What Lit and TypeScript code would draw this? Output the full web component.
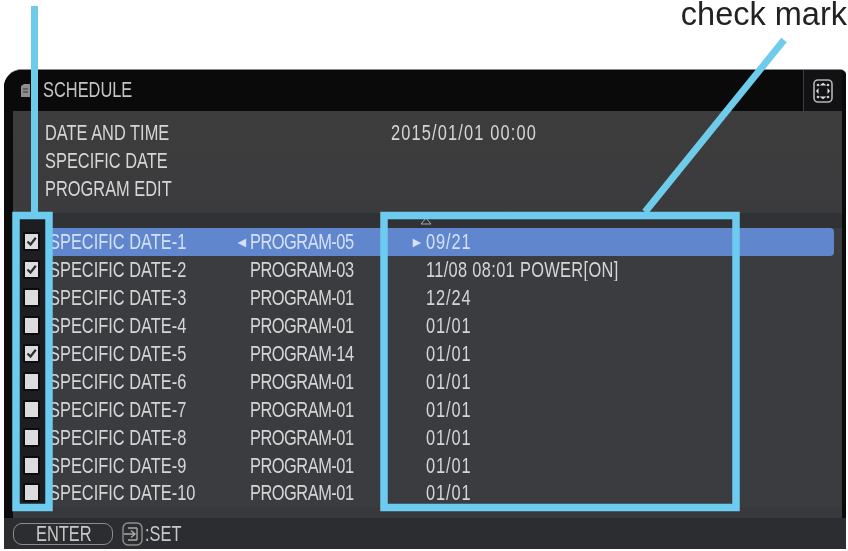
import { LitElement, html, css, svg } from "lit";
import { customElement } from "lit/decorators.js";

interface Row { name: string; program: string; date: string; checked: boolean; }

const ROWS: Row[] = [
  { name: "SPECIFIC DATE-1", program: "PROGRAM-05", date: "09/21", checked: true },
  { name: "SPECIFIC DATE-2", program: "PROGRAM-03", date: "11/08 08:01 POWER[ON]", checked: true },
  { name: "SPECIFIC DATE-3", program: "PROGRAM-01", date: "12/24", checked: false },
  { name: "SPECIFIC DATE-4", program: "PROGRAM-01", date: "01/01", checked: false },
  { name: "SPECIFIC DATE-5", program: "PROGRAM-14", date: "01/01", checked: true },
  { name: "SPECIFIC DATE-6", program: "PROGRAM-01", date: "01/01", checked: false },
  { name: "SPECIFIC DATE-7", program: "PROGRAM-01", date: "01/01", checked: false },
  { name: "SPECIFIC DATE-8", program: "PROGRAM-01", date: "01/01", checked: false },
  { name: "SPECIFIC DATE-9", program: "PROGRAM-01", date: "01/01", checked: false },
  { name: "SPECIFIC DATE-10", program: "PROGRAM-01", date: "01/01", checked: false },
];

@customElement("app-root")
export class AppRoot extends LitElement {
  static styles = css`
    :host {
      display: block;
      position: relative;
      width: 848px;
      height: 551px;
      overflow: hidden;
      background: #fff;
      font-family: "Liberation Sans", Arial, sans-serif;
      font-size: 20px;
      color: #d6d6d6;
    }
    .t {
      display: inline-block;
      white-space: nowrap;
      transform: scale(0.82, 1.08);
      transform-origin: left center;
    }
    .page { display: flex; flex-direction: column; height: 100%; box-sizing: border-box; padding: 69px 2px 2px 4px; }
    .window {
      flex: 1;
      display: flex;
      flex-direction: column;
      background: #0b0b0c;
      border-radius: 18px 6px 0 0;
      border-top: 1px solid #8a8a8a;
      overflow: hidden;
      filter: blur(0.6px);
    }
    .title {
      height: 41px;
      flex: none;
      display: flex;
      align-items: center;
      padding: 0 9px 0 16px;
      background: #0a0a0b;
    }
    .title .doc { width: 11px; height: 15px; flex: none; margin-right: 12px; }
    .title .label { flex: 1; color: #c4c4c4; margin-top: -2px; }
    .title .frame {
      width: 38px;
      align-self: stretch;
      border-left: 1px solid #3e3e40;
      display: flex;
      align-items: center;
      justify-content: center;
      margin-right: -5px;
      background: #121214;
    }
    .body {
      flex: 1;
      display: flex;
      flex-direction: column;
      margin: 0 4px 0 9px;
      background: #3a3c3f;
      border-radius: 5px 0 0 0;
    }
    .info {
      height: 102px;
      flex: none;
      box-sizing: border-box;
      padding: 7px 0 0 32px;
      background: linear-gradient(#3d3d3e, #3b3b3d);
    }
    .info-row { display: flex; height: 28px; align-items: center; }
    .info-row .k { width: 346px; flex: none; }
    .clock { letter-spacing: 1.4px; }
    .num { letter-spacing: 1.1px; }
    .num.tight { letter-spacing: 0.4px; }
    .list { display: flex; flex: none; background: #34363a; }
    .checks { width: 30px; margin-left: 4px; flex: none; background: #1c1e22; }
    .head { height: 15px; flex: none; }
    .rows { flex: 1; background: #3a3c3f; }
    .rows .head { background: #303236; display: flex; padding-left: 373px; align-items: flex-end; }
    .rows .head svg { margin-bottom: 3px; }
    .check-cell { height: 27.9px; display: flex; align-items: center; justify-content: center; padding-right: 1px; }
    .box {
      width: 13px;
      height: 15px;
      background: #dcdcdc;
      border: 2px solid #0c0c0e;
      border-radius: 2px;
      display: flex;
      align-items: center;
      justify-content: center;
    }
    .row {
      height: 27.9px;
      display: flex;
      align-items: center;
      border-radius: 0 4px 4px 0;
      margin-right: 8px;
      box-sizing: border-box;
    }
    .row.sel { background: #6087cd; color: #d5e0f6; }
    .row .name { width: 188px; flex: none; padding-left: 2px; box-sizing: border-box; }
    .row .lead { width: 15px; flex: none; font-size: 14px; text-align: left; }
    .row .prog { width: 160px; flex: none; letter-spacing: -0.6px; }
    .row .arrow { width: 16px; flex: none; font-size: 14px; }
    .row .date { flex: none; }
    .spacer { flex: 1; background: #38393c; }
    .footer {
      height: 31px;
      flex: none;
      margin-left: -9px;
      margin-right: -4px;
      background: #2c2d30;
      display: flex;
      align-items: center;
      padding-left: 9px;
    }
    .enter {
      width: 100px;
      height: 22px;
      border: 1px solid #8c8c8c;
      border-radius: 9px;
      display: flex;
      align-items: center;
      padding-left: 22px;
      box-sizing: border-box;
      margin-right: 9px;
      color: #c8c8c8;
    }
    .footer svg { flex: none; margin-right: 2px; }
    .footer .set { color: #c8c8c8; }
    .overlay { position: absolute; inset: 0; pointer-events: none; }
    .caption {
      position: absolute;
      right: 1px;
      top: 1px;
      font-size: 32.5px;
      line-height: 26px;
      color: #222;
      white-space: nowrap;
      filter: blur(0.4px);
    }
  `;

  private rowTpl(r: Row, i: number) {
    const sel = i === 0;
    const long = r.date.length > 5;
    return html`<div class="row ${sel ? "sel" : ""}">
      <span class="name"><span class="t">${r.name}</span></span>
      <span class="lead">${sel ? "◄" : ""}</span>
      <span class="prog"><span class="t">${r.program}</span></span>
      <span class="arrow">${sel ? "►" : ""}</span>
      <span class="date num ${long ? "tight" : ""}"><span class="t">${r.date}</span></span>
    </div>`;
  }

  private tick() {
    return html`<svg width="11" height="11" viewBox="0 0 11 11">
      <path d="M1.5 5.5 L4.5 8.5 L9.8 1.8" fill="none" stroke="#2b2f2a" stroke-width="2.2" />
    </svg>`;
  }

  render() {
    return html`
      <div class="page">
        <div class="window">
          <div class="title">
            <svg class="doc" viewBox="0 0 11 15">
              <path d="M1 3 L4 1 H10 V14 H1 Z" fill="#8e8e8e" />
              <path d="M3 6 H8 M3 9 H8" stroke="#333" stroke-width="1" />
            </svg>
            <span class="label"><span class="t">SCHEDULE</span></span>
            <div class="frame">
              <svg width="20" height="24" viewBox="0 0 20 24">
                <rect x="1" y="1" width="18" height="22" rx="4" fill="none" stroke="#b5b5b5" stroke-width="1.6" />
                <path d="M6.5 6.5 H13.5 L10 3.8 Z M6.5 17.5 H13.5 L10 20.2 Z" fill="#e0e0e0" />
                <path d="M5.5 9 V15 L3 12 Z M14.5 9 V15 L17 12 Z" fill="#e0e0e0" />
                <circle cx="5" cy="6" r="1.3" fill="#cfcfcf" />
                <circle cx="15" cy="6" r="1.3" fill="#cfcfcf" />
                <circle cx="5" cy="18" r="1.3" fill="#cfcfcf" />
                <circle cx="15" cy="18" r="1.3" fill="#cfcfcf" />
              </svg>
            </div>
          </div>
          <div class="body">
            <div class="info">
              <div class="info-row"><span class="k"><span class="t">DATE AND TIME</span></span><span class="clock"><span class="t">2015/01/01 00:00</span></span></div>
              <div class="info-row"><span class="k"><span class="t">SPECIFIC DATE</span></span></div>
              <div class="info-row"><span class="k"><span class="t">PROGRAM EDIT</span></span></div>
            </div>
            <div class="list">
              <div class="checks">
                <div class="head"></div>
                ${ROWS.map((r) => html`<div class="check-cell"><div class="box">${r.checked ? this.tick() : ""}</div></div>`)}
              </div>
              <div class="rows">
                <div class="head">
                  <svg width="12" height="8" viewBox="0 0 12 8"><path d="M6 1 L11 7 H1 Z" fill="none" stroke="#a8a8a8" stroke-width="1" /></svg>
                </div>
                ${ROWS.map((r, i) => this.rowTpl(r, i))}
              </div>
            </div>
            <div class="spacer"></div>
            <div class="footer">
              <div class="enter"><span class="t">ENTER</span></div>
              <svg width="21" height="24" viewBox="0 0 21 24">
                <rect x="1" y="1" width="19" height="22" rx="5" fill="none" stroke="#8f8f8f" stroke-width="1.4" />
                <path d="M2 12 H12 M9 8.5 L13 12 L9 15.5 M15 6 V18 M6 6 H15 M6 18 H15" fill="none" stroke="#a8a8a8" stroke-width="1.4" />
              </svg>
              <span class="set"><span class="t">:SET</span></span>
            </div>
          </div>
        </div>
      </div>
      <svg class="overlay" width="848" height="551" viewBox="0 0 848 551">
        ${svg`
          <path d="M34.5 6 V212" stroke="#6fcbea" stroke-width="7" fill="none" />
          <path d="M784 40 L645 212" stroke="#6fcbea" stroke-width="7" fill="none" />
          <rect x="16" y="215.5" width="33" height="292" fill="none" stroke="#6dcbf0" stroke-width="7.5" />
          <rect x="384" y="215.5" width="352" height="292" fill="none" stroke="#6dcbf0" stroke-width="7.5" />
        `}
      </svg>
      <div class="caption">check mark</div>
    `;
  }
}
